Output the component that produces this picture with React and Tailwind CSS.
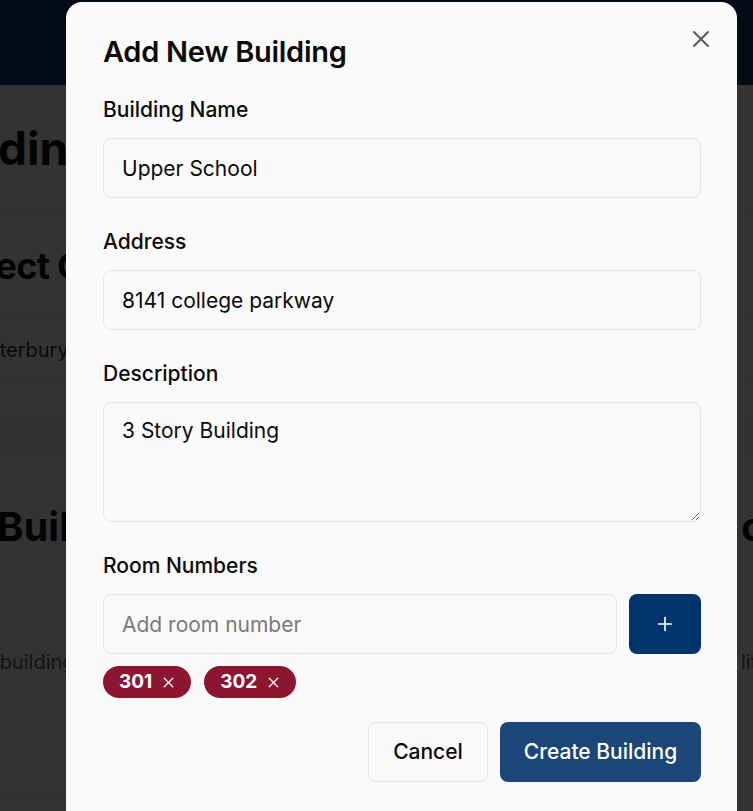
import { useState } from 'react'
import { X, Plus } from 'lucide-react'

const font = { fontFamily: 'Inter, "Noto Sans", sans-serif' }

function Field({ label, children }) {
  return (
    <div>
      <label className="block text-[21px] leading-6 font-medium text-[#0a0a0a] mb-4">{label}</label>
      {children}
    </div>
  )
}

export default function App() {
  const [name, setName] = useState('Upper School')
  const [address, setAddress] = useState('8141 college parkway')
  const [description, setDescription] = useState('3 Story Building')
  const [room, setRoom] = useState('')
  const [rooms, setRooms] = useState(['301', '302'])

  const addRoom = () => {
    if (!room.trim()) return
    setRooms([...rooms, room.trim()])
    setRoom('')
  }

  const inputClass =
    'block w-full h-[60px] rounded-lg border border-[#e4e4e4] bg-[#fafafa] px-[18px] text-[21px] text-[#0a0a0a] placeholder:text-[#7a7a7a] focus:outline-none'

  return (
    <div className="min-h-screen bg-white overflow-hidden" style={font}>
      {/* page behind the dialog */}
      <nav className="h-[85px] bg-[#0a376e]" />
      <div className="flex">
        <div className="w-[400px] flex flex-col">
          <div className="h-[127px] border-b border-[#f2f2f2] flex items-center whitespace-nowrap">
            <h1 className="-ml-[86px] text-[46px] font-bold text-[#111]">Buildings</h1>
          </div>
          <div className="h-[108px] border-b border-[#f2f2f2] flex items-center whitespace-nowrap">
            <h2 className="-ml-[57px] text-[36px] font-bold text-[#111] tracking-[-0.02em]">Select Campus</h2>
          </div>
          <div className="h-[60px] border-b border-[#f2f2f2] flex items-center whitespace-nowrap">
            <span className="-ml-[38px] text-[20px] text-[#333]">Canterbury</span>
          </div>
          <div className="h-[36px]" />
          <div className="h-[38px] bg-[#fbfbfb] border-y border-[#f2f2f2]" />
          <div className="h-[103px] flex items-end whitespace-nowrap">
            <h2 className="-ml-[3px] text-[40px] leading-[60px] font-bold text-[#111]">Buildings</h2>
          </div>
          <div className="h-[119px] flex items-end whitespace-nowrap">
            <p className="-ml-[33px] text-[20px] leading-7 text-[#666]">No buildings found</p>
          </div>
          <div className="h-[120px] border-b border-[#f2f2f2]" />
        </div>
        <div className="ml-auto w-[16px] overflow-hidden flex flex-col">
          <div className="h-[127px] border-b border-[#f2f2f2]" />
          <div className="h-[108px] border-b border-[#f2f2f2]" />
          <div className="h-[60px] border-b border-[#f2f2f2]" />
          <div className="h-[36px]" />
          <div className="h-[38px] bg-[#fbfbfb] border-y border-[#f2f2f2]" />
          <div className="h-[103px] flex items-end whitespace-nowrap">
            <span className="ml-[4px] text-[40px] leading-[60px] font-bold text-[#111]">cts</span>
          </div>
          <div className="h-[119px] flex items-end whitespace-nowrap">
            <span className="ml-[4px] text-[20px] leading-7 text-[#666]">lities</span>
          </div>
        </div>
      </div>

      {/* overlay */}
      <div className="fixed inset-0 bg-black/80" />

      {/* dialog */}
      <div className="fixed left-[66px] top-[2px] w-[671px] rounded-t-2xl bg-[#fafafa] pl-[37px] pr-[36px] pt-[34px] pb-[36px]">
        <button className="absolute right-[22px] top-[23px] text-[#555]">
          <X size={28} strokeWidth={1.6} />
        </button>
        <h2 className="text-[29px] leading-8 font-semibold text-[#0a0a0a] mb-[30px] tracking-[-0.01em]">Add New Building</h2>

        <div className="space-y-8">
          <Field label="Building Name">
            <input className={inputClass} value={name} onChange={(e) => setName(e.target.value)} />
          </Field>
          <Field label="Address">
            <input className={inputClass} value={address} onChange={(e) => setAddress(e.target.value)} />
          </Field>
          <Field label="Description">
            <textarea
              className="block w-full h-[120px] rounded-lg border border-[#e4e4e4] bg-[#fafafa] px-[18px] py-[14px] text-[21px] leading-7 text-[#0a0a0a] focus:outline-none"
              value={description}
              onChange={(e) => setDescription(e.target.value)}
            />
          </Field>
          <div>
            <label className="block text-[21px] leading-6 font-medium text-[#0a0a0a] mb-4">Room Numbers</label>
            <div className="flex gap-3">
              <input
                className={inputClass + ' flex-1'}
                placeholder="Add room number"
                value={room}
                onChange={(e) => setRoom(e.target.value)}
              />
              <button
                onClick={addRoom}
                className="w-[72px] h-[60px] shrink-0 rounded-lg bg-[#00356b] text-white flex items-center justify-center"
              >
                <Plus size={22} strokeWidth={1.75} />
              </button>
            </div>
            <div className="flex gap-[13px] mt-3">
              {rooms.map((r) => (
                <span
                  key={r}
                  className="inline-flex items-center gap-[8px] h-8 rounded-full bg-[#8c1530] pl-4 pr-[14px] text-[19px] font-bold text-white"
                >
                  {r}
                  <button onClick={() => setRooms(rooms.filter((x) => x !== r))} className="text-white">
                    <X size={17} strokeWidth={1.75} />
                  </button>
                </span>
              ))}
            </div>
          </div>
        </div>

        <div className="flex justify-end gap-3 mt-[24px]">
          <button className="h-[60px] w-[120px] rounded-lg border border-[#e4e4e4] bg-[#fafafa] text-[21px] font-medium text-[#0a0a0a]">
            Cancel
          </button>
          <button className="h-[60px] w-[201px] rounded-lg bg-[#1b4677] text-[21px] font-medium text-white">
            Create Building
          </button>
        </div>
      </div>
    </div>
  )
}
